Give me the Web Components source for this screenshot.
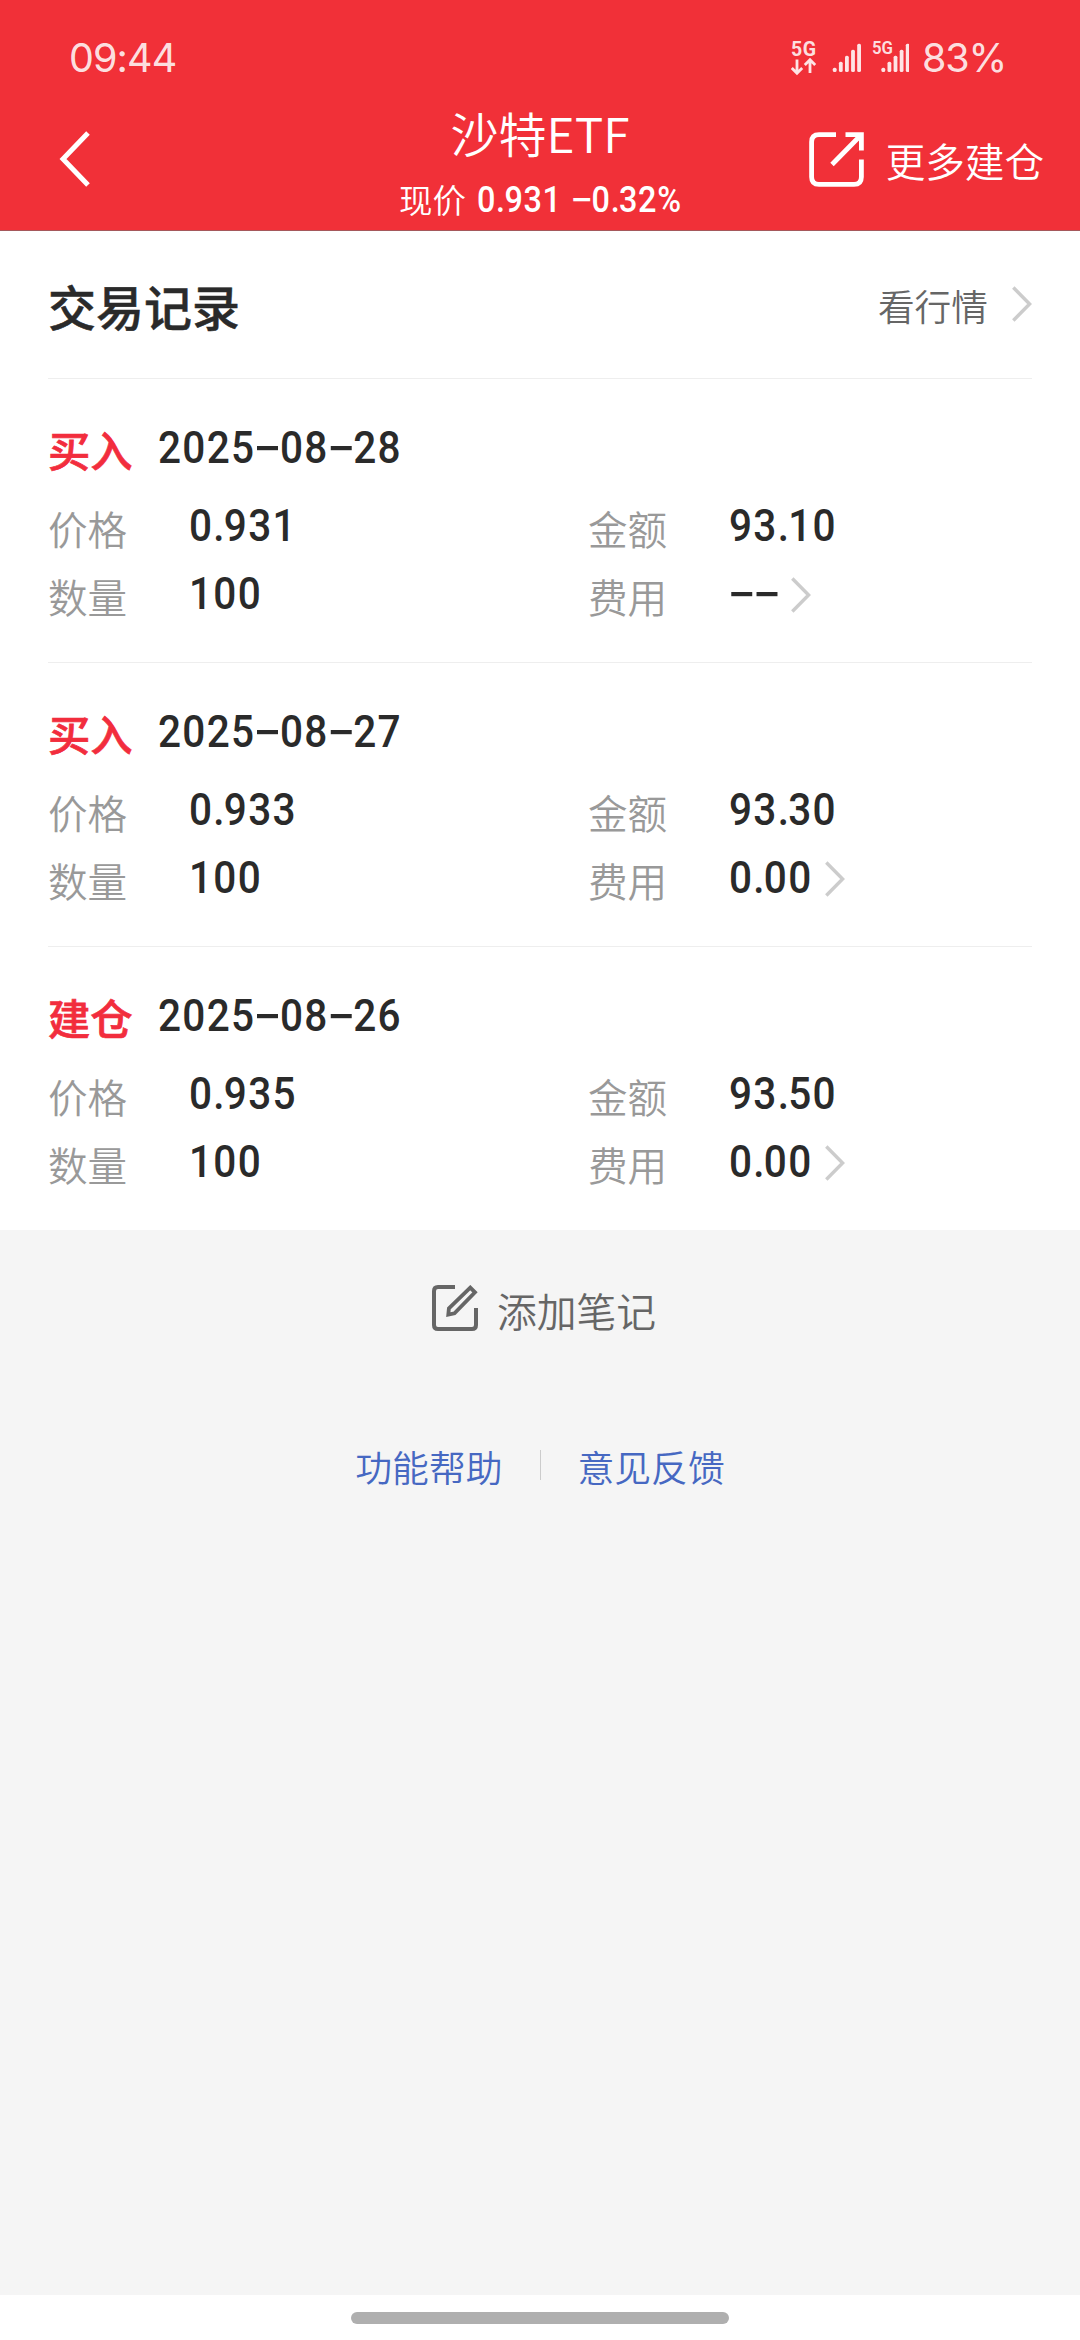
<!DOCTYPE html>
<html lang="zh-CN">
<head>
<meta charset="utf-8">
<meta name="viewport" content="width=device-width, initial-scale=1">
<title>沙特ETF</title>
<style>
  html,
  body {
    margin: 0;
    padding: 0;
  }

  body {
    --brand: #f13038;
    --text-primary: #2a2a2a;
    --text-secondary: #666;
    --text-muted: #999;
    --line: #eee;
    --number-font: Roboto, "Liberation Sans", sans-serif;
    background: #f5f5f5;
    color: var(--text-primary);
    font-family: "Noto Sans CJK SC", sans-serif;
    font-weight: 350;
  }
</style>
</head>
<body>
<trade-app>
  <status-bar slot="top" time="09:44" battery="83%"></status-bar>
  <nav-header slot="top" price="0.931" change="-0.32%">
    沙特ETF
    <span slot="action">更多建仓</span>
  </nav-header>

  <record-list heading="交易记录" link="看行情">
    <trade-record kind="买入" date="2025-08-28" price="0.931" count="100" amount="93.10" fee="--"></trade-record>
    <trade-record kind="买入" date="2025-08-27" price="0.933" count="100" amount="93.30" fee="0.00"></trade-record>
    <trade-record kind="建仓" date="2025-08-26" price="0.935" count="100" amount="93.50" fee="0.00"></trade-record>
  </record-list>
  <add-note>添加笔记</add-note>
  <footer-links>
    <span slot="first">功能帮助</span>
    <span slot="second">意见反馈</span>
  </footer-links>

  <home-indicator slot="bottom"></home-indicator>
</trade-app>

<script>
class TradeApp extends HTMLElement {
  constructor() {
    super();
    this.attachShadow({ mode: "open" });
    this.shadowRoot.innerHTML = `
      <style>
        :host {
          display: flex;
          flex-direction: column;
          width: 1080px;
          height: 2340px;
          overflow: hidden;
        }

        header {
          background: var(--brand);
          color: #fff;
          height: 230px;
          border-bottom: 1px solid #a5585b;
        }

        main {
          flex: 1;
        }
      </style>
      <header><slot name="top"></slot></header>
      <main><slot></slot></main>
      <slot name="bottom"></slot>
    `;
  }
}

// Narrow figures with wide dashes that sit at the middle of the digits.
class NumText extends HTMLElement {
  constructor() {
    super();
    this.attachShadow({ mode: "open" });
  }

  connectedCallback() {
    const value = this.getAttribute("value") || "";
    const html = value
      .replace("--", `<i class="empty">--</i>`)
      .replace(/(^|\d)-(?=\d)/g, "$1<i>-</i>")
      .replace(".", "<b>.</b>");
    this.shadowRoot.innerHTML = `
      <style>
        :host {
          display: inline-block;
          font-family: var(--number-font);
          font-size: 45px;
          font-weight: 500;
          letter-spacing: 0.033em;
          white-space: nowrap;
          transform: scaleX(0.9);
          transform-origin: left center;
        }

        b {
          font-weight: inherit;
          letter-spacing: -0.02em;
        }

        i {
          display: inline-block;
          width: 0.605em;
          font-family: Inter, sans-serif;
          font-style: normal;
          letter-spacing: 0;
          line-height: 1;
          text-align: center;
          transform: translateY(-0.02em) scaleX(1.6);
        }

        .empty {
          width: 1.14em;
          margin-right: 0.16em;
          letter-spacing: -0.07em;
        }
      </style>${html}`;
  }
}

class ChevronIcon extends HTMLElement {
  constructor() {
    super();
    this.attachShadow({ mode: "open" });
    this.shadowRoot.innerHTML = `
      <style>
        :host {
          display: block;
          width: 20px;
          height: 36px;
        }

        svg {
          display: block;
        }
      </style>
      <svg width="20" height="36" viewBox="0 0 20 36" fill="none" stroke="#ccc" stroke-width="3.4">
        <path d="M1.3 1.5 17.6 18 1.3 34.5" />
      </svg>
    `;
  }
}

class StatusBar extends HTMLElement {
  constructor() {
    super();
    this.attachShadow({ mode: "open" });
  }

  // Five bars, 6px apart, the first one only a dot.
  _bars(x) {
    return [0, 1, 2, 3, 4]
      .map((i) => `<rect x="${x + i * 6.1}" y="${35.7 - i * 6}" width="3.8" height="${4.4 + i * 6}" rx="1.6" />`)
      .join("");
  }

  connectedCallback() {
    this.shadowRoot.innerHTML = `
      <style>
        :host {
          display: flex;
          align-items: center;
          justify-content: space-between;
          height: 102px;
          padding: 14px 74px 0 69px;
          box-sizing: border-box;
          color: rgba(255, 255, 255, 0.87);
          font-family: Inter, sans-serif;
          font-size: 39.5px;
          font-weight: 400;
          line-height: 60px;
        }

        .right {
          display: flex;
          align-items: center;
          gap: 13px;
        }

        .time {
          letter-spacing: -0.9px;
        }

        .battery {
          letter-spacing: -1.2px;
        }

        svg {
          display: block;
        }

        text {
          font-family: Roboto, sans-serif;
          font-weight: 700;
          letter-spacing: 0;
        }
      </style>
      <span class="time">${this.getAttribute("time")}</span>
      <div class="right">
        <svg width="118" height="52" viewBox="0 0 118 52" fill="currentColor">
          <text x="0" y="24" font-size="19.5" textLength="25">5G</text>
          <g fill="none" stroke="currentColor" stroke-width="2.8">
            <path d="M6 27.5V41M0.8 36 6 41.2 11.2 36" />
            <path d="M19 41V28M13.8 33 19 27.8 24.2 33" />
          </g>
          ${this._bars(41.8)}
          <text x="81" y="22" font-size="18.5" textLength="21" lengthAdjust="spacingAndGlyphs" style="font-weight: 600">5G</text>
          ${this._bars(90.4)}
        </svg>
        <span class="battery">${this.getAttribute("battery")}</span>
      </div>
    `;
  }
}

class NavHeader extends HTMLElement {
  constructor() {
    super();
    this.attachShadow({ mode: "open" });
  }

  connectedCallback() {
    this.shadowRoot.innerHTML = `
      <style>
        :host {
          display: grid;
          grid-template-columns: 1fr 320px 1fr;
          height: 128px;
          color: #fff;
        }

        .back,
        .action {
          display: flex;
          align-items: center;
          height: 114px;
        }

        .back {
          padding-left: 59px;
        }

        .action {
          justify-content: flex-end;
          gap: 22px;
          padding-right: 36px;
          font-size: 39.6px;
          line-height: 62px;
        }

        ::slotted([slot="action"]) {
          padding-top: 2px;
        }

        .title {
          font-size: 48px;
          line-height: 60px;
          text-align: center;
        }

        .quote {
          display: flex;
          height: 48px;
          margin-top: 14px;
          padding-left: 19px;
          font-size: 33.5px;
          line-height: 49px;
        }

        .quote span {
          line-height: 46px;
          margin-right: 11px;
        }

        num-text {
          font-size: 36px;
          letter-spacing: 0.02em;
        }

        num-text:last-child {
          margin-left: 1px;
        }

        svg {
          display: block;
        }
      </style>
      <div class="back">
        <svg width="32" height="56" viewBox="0 0 32 56" fill="none" stroke="currentColor" stroke-width="5">
          <path d="M29 2 4 28 29 54" />
        </svg>
      </div>
      <div>
        <div class="title"><slot></slot></div>
        <div class="quote">
          <span>现价</span>
          <num-text value="${this.getAttribute("price")}"></num-text>
          <num-text value="${this.getAttribute("change")}"></num-text>
        </div>
      </div>
      <div class="action">
        <svg width="55" height="55" viewBox="0 0 55 55" fill="none" stroke="currentColor" stroke-width="4.8">
          <path d="M27 2.6H10Q2.6 2.6 2.6 10V45Q2.6 52.4 10 52.4H45Q52.4 52.4 52.4 45V27.5" />
          <path d="M36.5 2.6H52.4V18.5M51 4 23 32.5" />
        </svg>
        <slot name="action"></slot>
      </div>
    `;
  }
}

class RecordList extends HTMLElement {
  constructor() {
    super();
    this.attachShadow({ mode: "open" });
  }

  connectedCallback() {
    this.shadowRoot.innerHTML = `
      <style>
        :host {
          display: block;
          padding: 0 48px;
          background: #fff;
        }

        .head {
          display: flex;
          align-items: center;
          height: 148px;
          box-sizing: border-box;
          border-bottom: 1px solid var(--line);
        }

        h1 {
          flex: 1;
          margin: 0;
          font-size: 48px;
          font-weight: 500;
          line-height: 60px;
          padding-top: 1px;
          -webkit-text-stroke: 0.5px;
        }

        .link {
          color: var(--text-secondary);
          font-size: 36.7px;
          line-height: 48px;
          margin-right: 24px;
          padding-top: 1px;
        }

        chevron-icon {
          margin-bottom: 2px;
        }
      </style>
      <div class="head">
        <h1>${this.getAttribute("heading")}</h1>
        <span class="link">${this.getAttribute("link")}</span>
        <chevron-icon></chevron-icon>
      </div>
      <slot></slot>
    `;
  }
}

class TradeRecord extends HTMLElement {
  constructor() {
    super();
    this.attachShadow({ mode: "open" });
  }

  connectedCallback() {
    const get = (name) => this.getAttribute(name);
    this.shadowRoot.innerHTML = `
      <style>
        :host {
          display: block;
          height: 284px;
          padding-top: 39px;
          box-sizing: border-box;
          border-bottom: 1px solid var(--line);
        }

        :host(:last-of-type) {
          height: 283px;
          border-bottom: 0;
        }

        .head {
          display: flex;
          height: 60px;
          margin-bottom: 15px;
          line-height: 59px;
        }

        .kind {
          width: 110px;
          color: #f22d3d;
          font-size: 42.3px;
          font-weight: 500;
          line-height: 62px;
          -webkit-text-stroke: 0.7px;
        }

        .fields {
          display: grid;
          grid-template-columns: 540px 1fr;
          grid-auto-rows: 68px;
        }

        .field {
          display: flex;
          line-height: 66px;
        }

        .label {
          width: 140.5px;
          color: var(--text-muted);
          font-size: 39.6px;
          line-height: 69px;
        }

        chevron-icon {
          margin: 16px 0 0 4px;
        }
      </style>
      <div class="head">
        <span class="kind">${get("kind")}</span>
        <num-text value="${get("date")}"></num-text>
      </div>
      <div class="fields">
        <div class="field"><span class="label">价格</span><num-text value="${get("price")}"></num-text></div>
        <div class="field"><span class="label">金额</span><num-text value="${get("amount")}"></num-text></div>
        <div class="field"><span class="label">数量</span><num-text value="${get("count")}"></num-text></div>
        <div class="field"><span class="label">费用</span><num-text value="${get("fee")}"></num-text><chevron-icon></chevron-icon></div>
      </div>
    `;
  }
}

class AddNote extends HTMLElement {
  constructor() {
    super();
    this.attachShadow({ mode: "open" });
    this.shadowRoot.innerHTML = `
      <style>
        :host {
          display: flex;
          justify-content: center;
          gap: 19px;
          height: 60px;
          padding: 50px 0 0 8px;
          color: var(--text-secondary);
          font-size: 39.8px;
          line-height: 60px;
        }

        svg {
          display: block;
          margin-top: 5px;
        }
      </style>
      <svg width="46" height="46" viewBox="0 0 46 46" fill="none" stroke="currentColor" stroke-width="4">
        <path d="M23 2H6Q2 2 2 6V40Q2 44 6 44H40Q44 44 44 40V23" />
        <path d="M38.3 2.6 43 7.3 22.5 28.3 16.3 29.6 16.9 23.4Z" stroke-width="3.8" />
      </svg>
      <slot></slot>
    `;
  }
}

class FooterLinks extends HTMLElement {
  constructor() {
    super();
    this.attachShadow({ mode: "open" });
    this.shadowRoot.innerHTML = `
      <style>
        :host {
          display: flex;
          align-items: center;
          justify-content: center;
          height: 60px;
          padding-top: 96px;
          color: #4668c2;
          font-size: 36.8px;
          line-height: 60px;
        }

        .line {
          width: 1px;
          height: 30px;
          margin: 0 37px 2px;
          background: #ccc;
        }
      </style>
      <slot name="first"></slot>
      <div class="line"></div>
      <slot name="second"></slot>
    `;
  }
}

class HomeIndicator extends HTMLElement {
  constructor() {
    super();
    this.attachShadow({ mode: "open" });
    this.shadowRoot.innerHTML = `
      <style>
        :host {
          display: flex;
          justify-content: center;
          height: 45px;
          padding-top: 17px;
          box-sizing: border-box;
          background: #fff;
        }

        div {
          width: 378px;
          height: 12px;
          border-radius: 6px;
          background: #afafaf;
        }
      </style>
      <div></div>
    `;
  }
}

customElements.define("trade-app", TradeApp);
customElements.define("num-text", NumText);
customElements.define("chevron-icon", ChevronIcon);
customElements.define("status-bar", StatusBar);
customElements.define("nav-header", NavHeader);
customElements.define("record-list", RecordList);
customElements.define("trade-record", TradeRecord);
customElements.define("add-note", AddNote);
customElements.define("footer-links", FooterLinks);
customElements.define("home-indicator", HomeIndicator);
</script>
</body>
</html>
